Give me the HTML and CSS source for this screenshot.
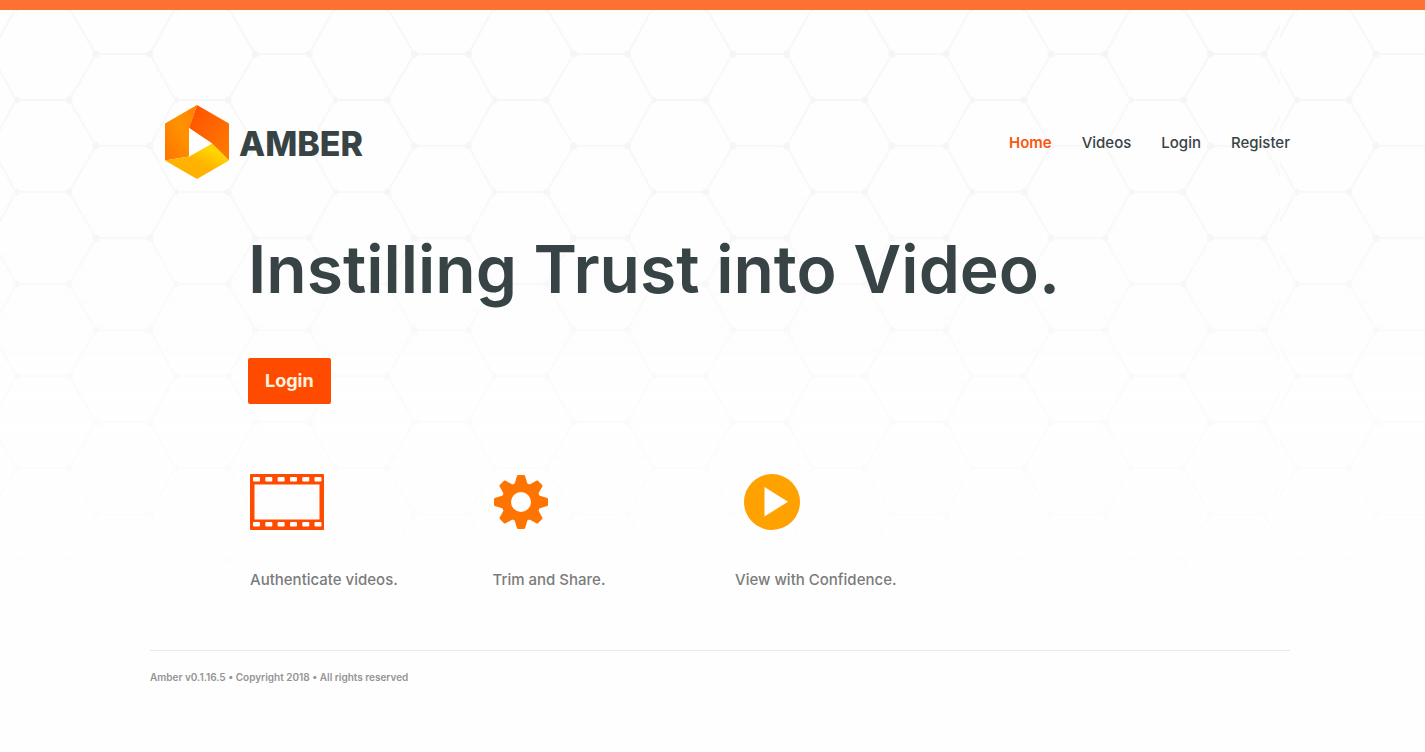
FILE: index.html
```html
<!DOCTYPE html>
<html lang="en">
<head>
<meta charset="utf-8">
<meta name="viewport" content="width=device-width, initial-scale=1">
<title>Amber</title>
<link rel="stylesheet" href="styles.css">
</head>
<body>
<div class="page">
  <header class="header">
    <a class="brand" href="#">
      <svg class="brand-mark" viewBox="0 0 64 74" aria-hidden="true">
        <defs>
          <linearGradient id="left" x1="0" y1="1" x2="1" y2="0"><stop offset="0" stop-color="#ff7400"/><stop offset=".55" stop-color="#ff9200"/><stop offset="1" stop-color="#ff8200"/></linearGradient>
          <linearGradient id="right" x1="0" y1="0" x2="1" y2="1"><stop offset="0" stop-color="#ff4f00"/><stop offset="1" stop-color="#ff7d00"/></linearGradient>
          <linearGradient id="bottom" x1="0" y1="1" x2="1" y2="0"><stop offset="0" stop-color="#ffac00"/><stop offset=".5" stop-color="#ffb400"/><stop offset=".8" stop-color="#ffd800"/><stop offset="1" stop-color="#ffb000"/></linearGradient>
        </defs>
        <path fill="url(#left)" d="M32 0 0 18.5V55.500L24 51.500V23z"/>
        <path fill="url(#right)" d="M32 0 64 18.500V55.500L47 38.500 24 23z"/>
        <path fill="url(#bottom)" d="M0 55.500 24 51.500 47 38.500 64 55.500 32 74z"/>
        <path fill="#fff" d="M24 23v28.500l23-13z"/>
      </svg>
      <span class="brand-name">AMBER</span>
    </a>
    <nav class="nav">
      <a class="nav-link active" href="#">Home</a>
      <a class="nav-link" href="#">Videos</a>
      <a class="nav-link" href="#">Login</a>
      <a class="nav-link" href="#">Register</a>
    </nav>
  </header>
  <main class="main">
    <h1 class="title">Instilling Trust into Video.</h1>
    <button class="login" type="button">Login</button>
    <div class="features">
      <section class="feature">
        <svg class="icon icon-film" viewBox="0 0 74 56" aria-hidden="true">
          <path fill="#ff4b00" fill-rule="evenodd" d="M1 0h72a1 1 0 0 1 1 1v54a1 1 0 0 1-1 1H1a1 1 0 0 1-1-1V1a1 1 0 0 1 1-1zM4.500 10.500v35h65v-35z"/>
          <g fill="#fff"><rect x="3" y="3" width="7" height="4.500" rx="1"/><rect x="15.300" y="3" width="7" height="4.500" rx="1"/><rect x="27.600" y="3" width="7" height="4.500" rx="1"/><rect x="40" y="3" width="7" height="4.500" rx="1"/><rect x="52.300" y="3" width="7" height="4.500" rx="1"/><rect x="64.500" y="3" width="7" height="4.500" rx="1"/><rect x="3" y="48" width="7" height="4.500" rx="1"/><rect x="15.300" y="48" width="7" height="4.500" rx="1"/><rect x="27.600" y="48" width="7" height="4.500" rx="1"/><rect x="40" y="48" width="7" height="4.500" rx="1"/><rect x="52.300" y="48" width="7" height="4.500" rx="1"/><rect x="64.500" y="48" width="7" height="4.500" rx="1"/></g>
        </svg>
        <p class="caption">Authenticate videos.</p>
      </section>
      <section class="feature">
        <svg class="icon icon-gear" viewBox="-28 -28 56 56" aria-hidden="true">
          <defs><path id="tooth" d="M-6.500-18-4-26.300Q-3.500-27-3-27H3Q3.500-27 4-26.300L6.500-18z"/></defs>
          <g fill="#ff7400">
            <path fill-rule="evenodd" d="M0-19.500A19.500 19.500 0 1 1 0 19.500 19.500 19.500 0 1 1 0-19.500zM0-10A10 10 0 1 0 0 10 10 10 0 1 0 0-10z"/>
            <use href="#tooth"/><use href="#tooth" transform="rotate(45)"/><use href="#tooth" transform="rotate(90)"/><use href="#tooth" transform="rotate(135)"/><use href="#tooth" transform="rotate(180)"/><use href="#tooth" transform="rotate(225)"/><use href="#tooth" transform="rotate(270)"/><use href="#tooth" transform="rotate(315)"/>
          </g>
        </svg>
        <p class="caption">Trim and Share.</p>
      </section>
      <section class="feature">
        <svg class="icon icon-play" viewBox="0 0 74 56" aria-hidden="true">
          <circle cx="37" cy="28" r="28" fill="#ffa200"/><path fill="#fff" d="M29.500 13v29.500L53 27.700z"/>
        </svg>
        <p class="caption">View with Confidence.</p>
      </section>
    </div>
  </main>
  <footer class="footer">Amber v0.1.16.5 • Copyright 2018 • All rights reserved</footer>
</div>
</body>
</html>
```
FILE: styles.css
```css
* { box-sizing: border-box; }

body {
  margin: 0;
  padding: 0 0 0 15px;
  min-height: 100vh;
  border-top: 10px solid #ff7033;
  font-family: Inter, "Open Sans", sans-serif;
  color: #374345;
  background: #fefefe url("data:image/svg+xml,%3Csvg xmlns='http://www.w3.org/2000/svg' width='1280' height='610'%3E%3Cdefs%3E%3Cpattern id='p' width='159.2' height='92' patternUnits='userSpaceOnUse' x='16' y='-2'%3E%3Cg fill='none' stroke='%23f7f7f7' stroke-width='2'%3E%3Cpath d='M0 0H53L80 46 53 92H0M80 46H134L159.200 0M134 46 159.200 92'/%3E%3C/g%3E%3Cg fill='%23f5f5f5'%3E%3Ccircle cx='80' cy='46' r='3.500'/%3E%3Ccircle cx='134' cy='46' r='3.500'/%3E%3Ccircle cx='53' cy='0' r='3.500'/%3E%3Ccircle cx='53' cy='92' r='3.500'/%3E%3Ccircle cx='0' cy='0' r='3.500'/%3E%3Ccircle cx='0' cy='92' r='3.500'/%3E%3C/g%3E%3C/pattern%3E%3ClinearGradient id='f' x2='0' y2='1'%3E%3Cstop stop-color='%23fefefe' stop-opacity='0'/%3E%3Cstop offset='.3' stop-color='%23fefefe' stop-opacity='.1'/%3E%3Cstop offset='.6' stop-color='%23fefefe' stop-opacity='.55'/%3E%3Cstop offset='1' stop-color='%23fefefe'/%3E%3C/linearGradient%3E%3C/defs%3E%3Crect width='1280' height='610' fill='url(%23p)'/%3E%3Crect width='1280' height='610' fill='url(%23f)'/%3E%3C/svg%3E") repeat-x 0 10px;
}

.page { max-width: 1140px; margin: 0 auto; }

.header {
  display: flex;
  justify-content: space-between;
  align-items: center;
  padding: 95px 0 0 15px;
}

.brand {
  display: flex;
  align-items: center;
  gap: 10px;
  color: inherit;
  text-decoration: none;
}
.brand-mark { width: 64px; height: 74px; }
.brand-name { font-size: 34px; line-height: 40px; font-weight: 800; padding-top: 4px; }

.nav { display: flex; gap: 30px; padding-top: 2px; }
.nav-link {
  font-size: 15px;
  line-height: 20px;
  font-weight: 500;
  color: #374345;
  text-decoration: none;
}
.active { color: #f9560f; font-weight: 600; }

.main { padding: 50px 0 0 98px; }

.title {
  margin: 0;
  font-size: 66px;
  line-height: 80px;
  font-weight: 600;
}

.login {
  display: block;
  margin-top: 49px;
  padding: 0 17px;
  height: 46px;
  border: 0;
  border-radius: 2px;
  background: #ff4b00;
  color: #fff3e0;
  font: 700 18px/24px Inter, "Open Sans", sans-serif;
}

.features {
  display: grid;
  grid-template-columns: repeat(4, 1fr);
  max-width: 972px;
  margin-top: 70px;
  padding-left: 2px;
}
.icon { display: block; height: 56px; }
.icon-film, .icon-play { width: 74px; }
.icon-gear { width: 56px; }
.caption {
  margin: 40px 0 0;
  font-size: 15px;
  line-height: 20px;
  font-weight: 500;
  color: #7b7b7b;
}

.footer {
  margin-top: 60px;
  padding: 18px 0 24px;
  border-top: 1px solid #e9e9e9;
  font-size: 10px;
  line-height: 16px;
  font-weight: 600;
  color: #949494;
}
```
